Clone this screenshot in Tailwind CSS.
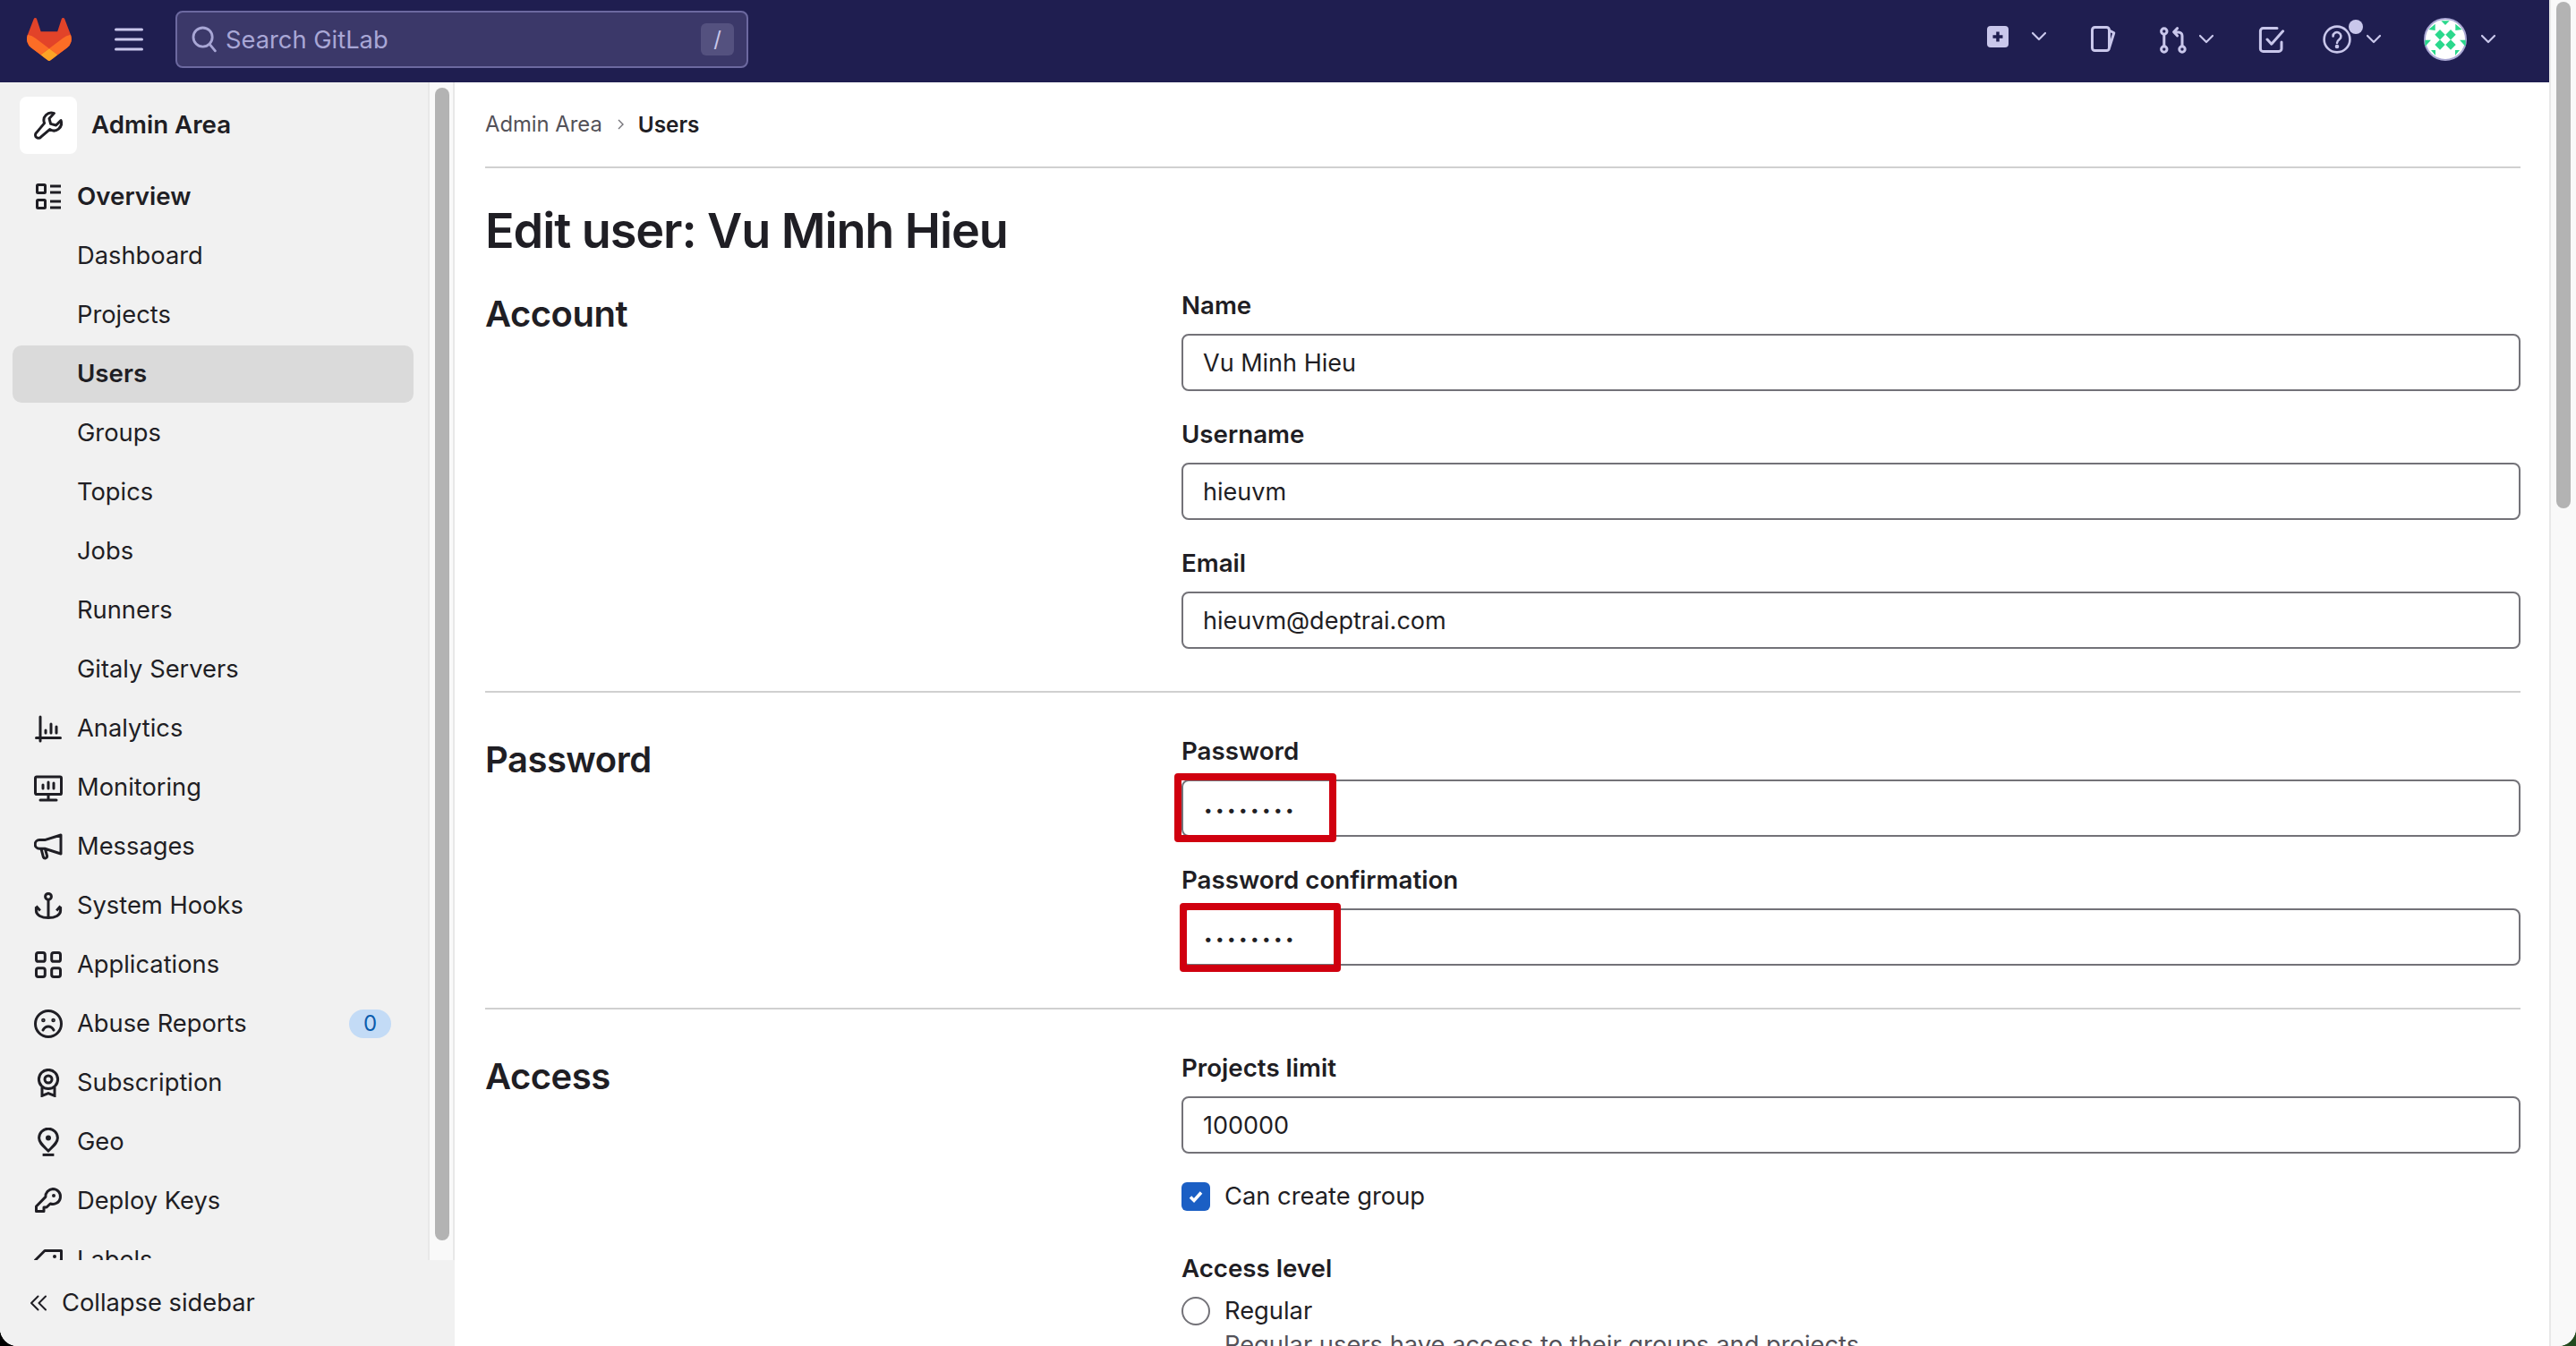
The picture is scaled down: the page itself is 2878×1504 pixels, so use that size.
<!DOCTYPE html>
<html lang="en">
<head>
<meta charset="utf-8">
<title>Edit user · Admin Area · GitLab</title>
<script src="https://cdn.jsdelivr.net/npm/@tailwindcss/browser@4"></script>
</head>
<body class="bg-[linear-gradient(90deg,#000_50%,#234a1f_50%)]">
<div class="relative w-[2878px] h-[1504px] overflow-hidden font-['Inter','Liberation_Sans',sans-serif] text-[#1f1e24] text-[27.3px] bg-white flex rounded-bl-[20px] rounded-br-[20px]">
  <div class="flex-1 min-w-0 flex flex-col">
    <!-- top bar -->
    <header class="h-[92px] shrink-0 bg-[#1f1e50] flex items-center pb-[4px] text-[#c9c7eb]">
      <svg class="ml-[30px] w-[50px] h-[48px]" viewBox="0 0 25 24"><path d="m24.507 9.5-.034-.09L21.082.562a.896.896 0 0 0-1.694.091l-2.29 7.01H7.825L5.535.653a.898.898 0 0 0-1.694-.09L.451 9.411.416 9.5a6.297 6.297 0 0 0 2.09 7.278l.012.01.03.022 5.16 3.867 2.56 1.935 1.554 1.176a1.051 1.051 0 0 0 1.268 0l1.555-1.176 2.56-1.935 5.197-3.89.014-.01A6.297 6.297 0 0 0 24.507 9.5Z" fill="#E24329"/><path d="m24.507 9.5-.034-.09a11.44 11.44 0 0 0-4.56 2.051l-7.447 5.632 4.742 3.584 5.197-3.89.014-.01A6.297 6.297 0 0 0 24.507 9.5Z" fill="#FC6D26"/><path d="m7.707 20.677 2.56 1.935 1.555 1.176a1.051 1.051 0 0 0 1.268 0l1.555-1.176 2.56-1.935-4.743-3.584-4.755 3.584Z" fill="#FCA326"/><path d="M5.01 11.461a11.43 11.43 0 0 0-4.56-2.05L.416 9.5a6.297 6.297 0 0 0 2.09 7.278l.012.01.03.022 5.16 3.867 4.745-3.584-7.444-5.632Z" fill="#FC6D26"/></svg>
      <svg class="ml-[48px] w-[32px] h-[32px]" viewBox="0 0 16 16" fill="none" stroke="currentColor" stroke-width="1.5" stroke-linecap="round"><path d="M.75 2.5h14.5M.75 8h14.5M.75 13.5h14.5"/></svg>
      <div class="ml-[36px] w-[640px] h-[64px] rounded-[8px] bg-[#3b3869] border-2 border-[#6c69a0] flex items-center pl-[16px] pr-[14px]">
        <svg class="w-[28px] h-[32px]" viewBox="0 0 14 16" fill="none" stroke="#a9a7d6" stroke-width="1.4" stroke-linecap="round"><circle cx="6.3" cy="6.8" r="5.3"/><path d="M10.2 10.8l3 3.6"/></svg>
        <span class="ml-[10px] pt-[2px] text-[#a9a7d6]">Search GitLab</span>
        <span class="ml-auto w-[37px] h-[36px] rounded-[6px] bg-[#54517f] flex items-center justify-center text-[#c9c7eb] text-[24px]">/</span>
      </div>
      <div class="ml-auto flex items-center relative w-[600px] h-full">
        <svg class="absolute left-[-28px] top-[29px] w-[24px] h-[24px]" viewBox="0 0 24 24"><rect width="24" height="24" rx="4" fill="#c9c7eb"/><path d="M12 6.5v11M6.500 12h11" stroke="#1f1e50" stroke-width="3.5"/></svg>
        <svg class="absolute left-[22px] top-[34px] w-[16px] h-[16px]" viewBox="0 0 16 16" fill="none" stroke="currentColor" stroke-width="2.2" stroke-linecap="round" stroke-linejoin="round"><path d="M1 3l7 7 7-7"/></svg>
        <svg class="absolute left-[86px] top-[28px] w-[32px] h-[32px]" viewBox="0 0 16 16" fill="none" stroke="currentColor" stroke-width="1.5" stroke-linejoin="round"><rect x="1.75" y="1.25" width="9.5" height="13" rx="1.5"/><path d="M11.3 3l2.600 1.400-2.600 8.200"/></svg>
        <svg class="absolute left-[164px] top-[28px] w-[32px] h-[32px]" viewBox="0 0 16 16" fill="none" stroke="currentColor" stroke-width="1.5" stroke-linecap="round" stroke-linejoin="round"><circle cx="2.9" cy="3.500" r="1.6"/><circle cx="2.9" cy="13.500" r="1.6"/><circle cx="13" cy="13.500" r="1.6"/><path d="M2.900 5.100v6.800M13 11.900V6a2 2 0 0 0-2-2H8.600M10.300 1.800L8.300 3.900l2 2.100"/></svg>
        <svg class="absolute left-[209px] top-[37px] w-[16px] h-[16px]" viewBox="0 0 16 16" fill="none" stroke="currentColor" stroke-width="2.2" stroke-linecap="round" stroke-linejoin="round"><path d="M1 3l7 7 7-7"/></svg>
        <svg class="absolute left-[274px] top-[28px] w-[32px] h-[32px]" viewBox="0 0 16 16" fill="none" stroke="currentColor" stroke-width="1.5" stroke-linecap="round" stroke-linejoin="round"><path d="M13.500 9.500v3.700a1.500 1.500 0 0 1-1.500 1.500H3.200a1.500 1.500 0 0 1-1.500-1.500V3.300a1.500 1.500 0 0 1 1.500-1.500H11"/><path d="M5.500 8l2.400 2.600 6.400-7.200"/></svg>
        <svg class="absolute left-[347px] top-[28px] w-[32px] h-[32px]" viewBox="0 0 16 16" fill="none" stroke="currentColor" stroke-width="1.3" stroke-linecap="round"><circle cx="8" cy="8" r="7.2"/><path d="M5.800 6.200a2.200 2.200 0 1 1 3.500 1.800c-.8.600-1.300 1-1.300 2"/><circle cx="8" cy="12" r=".5" fill="currentColor"/></svg>
        <span class="absolute left-[376px] top-[22px] w-[16px] h-[16px] rounded-full bg-[#c9c7eb]"></span>
        <svg class="absolute left-[396px] top-[37px] w-[16px] h-[16px]" viewBox="0 0 16 16" fill="none" stroke="currentColor" stroke-width="2.2" stroke-linecap="round" stroke-linejoin="round"><path d="M1 3l7 7 7-7"/></svg>
        <svg class="absolute left-[460px] top-[20px] w-[48px] h-[48px]" viewBox="0 0 48 48"><circle cx="24" cy="24" r="23" fill="#fff" stroke="#aaa8d4" stroke-width="2"/><g fill="#2bd88c"><path d="M18 13l5.700 5.700L18 24.400l-5.700-5.700zM30 13l5.700 5.700L30 24.400l-5.700-5.700zM18 24.300l5.700 5.700L18 35.700 12.300 30zM30 24.300l5.700 5.700L30 35.700 24.300 30zM19.300 3.300h9.400L24 8zM12.700 6.700L5.300 13l7.400 1zM35.300 6.700L42.700 13l-7.400 1zM1.300 24.700H8L1.300 32zM46.700 24.700H40L46.700 32zM8 36h5v6zM40 36h-5v6z"/></g></svg>
        <svg class="absolute left-[524px] top-[37px] w-[16px] h-[16px]" viewBox="0 0 16 16" fill="none" stroke="currentColor" stroke-width="2.2" stroke-linecap="round" stroke-linejoin="round"><path d="M1 3l7 7 7-7"/></svg>
      </div>
    </header>

    <div class="flex-1 min-h-0 flex">
      <!-- sidebar -->
      <aside class="w-[508px] shrink-0 flex flex-col bg-[#f1f1f1]">
        <div class="flex-1 min-h-0 flex overflow-hidden">
          <nav class="w-[478px] shrink-0 bg-[#f1f1f1]">
            <div class="h-[95px] pt-[16px] pl-[22px] flex items-start">
              <span class="w-[64px] h-[64px] rounded-[8px] bg-white flex items-center justify-center">
                <svg class="w-[32px] h-[32px]" viewBox="0 0 16 16" fill="none" stroke="#1f1e24" stroke-width="1.5" stroke-linejoin="round"><path d="M15 5.300L12.300 8 9.300 7.200 8.500 4.200 11.200 1.300A4.200 4.200 0 0 0 5.800 6.800L1.200 12.300a1.700 1.700 0 0 0 2.600 2.300L8.800 10.300A4.200 4.200 0 0 0 15 5.300z"/></svg>
              </span>
              <span class="ml-[16px] h-[64px] flex items-center font-semibold text-[27.7px]">Admin Area</span>
            </div>
            <ul>
              <li class="h-[66px] flex items-center pl-[38px] font-semibold text-[27.7px]"><svg class="w-[32px] h-[32px] mr-[16px] shrink-0" viewBox="0 0 16 16" fill="none" stroke="#1f1e24" stroke-width="1.5"><rect x="1.75" y="1.25" width="4.5" height="4.5" rx=".5"/><rect x="1.75" y="9.750" width="4.500" height="4.500" rx=".5"/><path d="M9 2h6M9 5.500h6M9 10.500h6M9 14h6"/></svg>Overview</li>
              <li class="h-[66px] flex items-center pl-[86px]">Dashboard</li>
              <li class="h-[66px] flex items-center pl-[86px]">Projects</li>
              <li class="h-[64px] my-[1px] flex items-center ml-[14px] pl-[72px] w-[448px] rounded-[10px] bg-[#dadada] font-semibold text-[27.7px]">Users</li>
              <li class="h-[66px] flex items-center pl-[86px]">Groups</li>
              <li class="h-[66px] flex items-center pl-[86px]">Topics</li>
              <li class="h-[66px] flex items-center pl-[86px]">Jobs</li>
              <li class="h-[66px] flex items-center pl-[86px]">Runners</li>
              <li class="h-[66px] flex items-center pl-[86px]">Gitaly Servers</li>
              <li class="h-[66px] flex items-center pl-[38px]"><svg class="w-[32px] h-[32px] mr-[16px] shrink-0" viewBox="0 0 16 16" fill="none" stroke="#1f1e24" stroke-width="1.5" stroke-linecap="round"><path d="M3.500 1.500V15M1.250 13.200h13.500M6.500 9v1.500M9.500 5.500v5M12.500 7v3.500"/></svg>Analytics</li>
              <li class="h-[66px] flex items-center pl-[38px]"><svg class="w-[32px] h-[32px] mr-[16px] shrink-0" viewBox="0 0 16 16" fill="none" stroke="#1f1e24" stroke-width="1.5" stroke-linecap="round"><rect x=".75" y="2" width="14.500" height="9.800" rx=".7"/><path d="M8 12v3M3.500 15h9M5 6.500v2M8 5v3.500M11 5.500v3"/></svg>Monitoring</li>
              <li class="h-[66px] flex items-center pl-[38px]"><svg class="w-[32px] h-[32px] mr-[16px] shrink-0" viewBox="0 0 16 16" fill="none" stroke="#1f1e24" stroke-width="1.5" stroke-linejoin="round"><path d="M15 1.500L6 4.300H3a2.300 2.300 0 0 0 0 4.800h3l9 2.900zM4 9.200l1.200 4.600a1.100 1.100 0 0 0 2.100-.6L6.200 9.200"/></svg>Messages</li>
              <li class="h-[66px] flex items-center pl-[38px]"><svg class="w-[32px] h-[32px] mr-[16px] shrink-0" viewBox="0 0 16 16" fill="none" stroke="#1f1e24" stroke-width="1.5"><circle cx="8" cy="2.900" r="1.700"/><path d="M8 4.600v10M1.200 8.600v2.200c0 2.500 3 4 6.800 4s6.800-1.500 6.800-4V8.600M1.200 8.200l2.200 2.500M14.800 8.200l-2.200 2.500"/></svg>System Hooks</li>
              <li class="h-[66px] flex items-center pl-[38px]"><svg class="w-[32px] h-[32px] mr-[16px] shrink-0" viewBox="0 0 16 16" fill="none" stroke="#1f1e24" stroke-width="1.5"><rect x="1.25" y="1.25" width="4.900" height="4.900" rx="1.200"/><rect x="9.850" y="1.25" width="4.900" height="4.900" rx="1.200"/><rect x="1.25" y="9.850" width="4.900" height="4.900" rx="1.200"/><rect x="9.850" y="9.850" width="4.900" height="4.900" rx="1.200"/></svg>Applications</li>
              <li class="h-[66px] flex items-center pl-[38px] pr-[41px]"><svg class="w-[32px] h-[32px] mr-[16px] shrink-0" viewBox="0 0 16 16" fill="none" stroke="#1f1e24" stroke-width="1.5" stroke-linecap="round"><circle cx="8" cy="8" r="7.250"/><path d="M5 11.500c.7-1.300 1.700-2 3-2s2.300.7 3 2"/><circle cx="5.200" cy="6" r=".4" fill="#1f1e24"/><circle cx="10.800" cy="6" r=".4" fill="#1f1e24"/></svg>Abuse Reports<span class="ml-auto w-[47px] h-[32px] rounded-full bg-[#c3dbf6] text-[#0b5cad] text-[24px] flex items-center justify-center">0</span></li>
              <li class="h-[66px] flex items-center pl-[38px]"><svg class="w-[32px] h-[32px] mr-[16px] shrink-0" viewBox="0 0 16 16" fill="none" stroke="#1f1e24" stroke-width="1.5"><circle cx="8" cy="6" r="5.300"/><circle cx="8" cy="6" r="2"/><path d="M4.500 10.500V15.200L8 13.800l3.500 1.400V10.500"/></svg>Subscription</li>
              <li class="h-[66px] flex items-center pl-[38px]"><svg class="w-[32px] h-[32px] mr-[16px] shrink-0" viewBox="0 0 16 16" fill="none" stroke="#1f1e24" stroke-width="1.5"><path d="M8 13C5.500 10.500 2.800 8.500 2.800 5.800a5.200 5.200 0 0 1 10.400 0C13.200 8.500 10.500 10.500 8 13z"/><circle cx="8" cy="5.800" r="1.500" fill="#1f1e24" stroke="none"/><path d="M4.800 15.200h6.400"/></svg>Geo</li>
              <li class="h-[66px] flex items-center pl-[38px]"><svg class="w-[32px] h-[32px] mr-[16px] shrink-0" viewBox="0 0 16 16" fill="none" stroke="#1f1e24" stroke-width="1.5" stroke-linejoin="round"><path d="M10.500 1.250a4.250 4.250 0 1 1-1.400 8.260L7 11.500H5.500v2.200H1.250V11l5.200-5.300a4.250 4.250 0 0 1 4.050-4.450z"/><circle cx="11" cy="5" r="1" fill="#1f1e24" stroke="none"/></svg>Deploy Keys</li>
              <li class="h-[66px] flex items-center pl-[38px]"><svg class="w-[32px] h-[32px] mr-[16px] shrink-0" viewBox="0 0 16 16" fill="none" stroke="#1f1e24" stroke-width="1.5" stroke-linejoin="round"><path d="M.75 8L6 2.750h9.250V8L9.500 14 .75 8z"/><circle cx="11.500" cy="6" r="1" fill="#1f1e24" stroke="none"/></svg>Labels</li>
            </ul>
          </nav>
          <div class="w-[30px] shrink-0 bg-[#f9f9f9] border-l-2 border-r-2 border-[#e8e8e8] pt-[6px] pl-[6px]">
            <div class="w-[16px] h-[1288px] rounded-full bg-[#b3b3b3]"></div>
          </div>
        </div>
        <div class="h-[96px] shrink-0 flex items-center pl-[34px] bg-[#f1f1f1]">
          <svg class="w-[18px] h-[18px] mr-[17px]" viewBox="0 0 18 18" fill="none" stroke="#1f1e24" stroke-width="2" stroke-linecap="round" stroke-linejoin="round"><path d="M8.500 1.500L1 9l7.500 7.500M17 1.500L9.500 9l7.500 7.500"/></svg>
          <span>Collapse sidebar</span>
        </div>
      </aside>

      <!-- content -->
      <main class="flex-1 min-w-0 pl-[34px] pr-[32px] overflow-hidden">
        <div class="h-[96px] border-b-2 border-[#d0d0d0] flex items-center text-[24px]">
          <span class="text-[#535158] text-[23.800px]">Admin Area</span>
          <svg class="mx-[14px] w-[12px] h-[14px]" viewBox="0 0 12 14" fill="none" stroke="#737278" stroke-width="1.4"><path d="M4 2l5 5-5 5"/></svg>
          <span class="font-semibold text-[24.300px]">Users</span>
        </div>
        <h1 class="mt-[34px] h-[70px] mb-[31px] flex items-center text-[54px] font-semibold tracking-[-1.1px]">Edit user: Vu Minh Hieu</h1>

        <section class="flex pb-[47px] border-b-2 border-[#d0d0d0]">
          <h2 class="w-[778px] shrink-0 h-[56px] flex items-center text-[40px] font-semibold tracking-[-0.5px]">Account</h2>
          <div class="flex-1 flex flex-col gap-[30px]">
            <div><label class="h-[34px] pt-[3px] flex items-center font-semibold text-[27.7px] mb-[16px]">Name</label><input class="w-full h-[64px] border-2 border-[#737278] rounded-[8px] px-[22px] outline-none text-[27px]" value="Vu Minh Hieu"></div>
            <div><label class="h-[34px] pt-[3px] flex items-center font-semibold text-[27.7px] mb-[16px]">Username</label><input class="w-full h-[64px] border-2 border-[#737278] rounded-[8px] px-[22px] outline-none text-[27px]" value="hieuvm"></div>
            <div><label class="h-[34px] pt-[3px] flex items-center font-semibold text-[27.7px] mb-[16px]">Email</label><input class="w-full h-[64px] border-2 border-[#737278] rounded-[8px] px-[22px] outline-none text-[27px]" value="hieuvm@deptrai.com"></div>
          </div>
        </section>

        <section class="flex pt-[47px] pb-[47px] border-b-2 border-[#d0d0d0]">
          <h2 class="w-[778px] shrink-0 h-[56px] flex items-center text-[40px] font-semibold tracking-[-0.5px]">Password</h2>
          <div class="flex-1 flex flex-col gap-[30px]">
            <div class="relative"><label class="h-[34px] pt-[3px] flex items-center font-semibold text-[27.7px] mb-[16px]">Password</label><input type="password" class="w-full h-[64px] border-2 border-[#737278] rounded-[8px] pl-[23px] pt-[4px] outline-none text-[17px] tracking-[3.45px]" value="password"><span class="absolute left-[-8px] top-[43px] w-[181px] h-[77px] border-[8px] border-[#d0000f] rounded-[4px]"></span></div>
            <div class="relative"><label class="h-[34px] pt-[3px] flex items-center font-semibold text-[27.7px] mb-[16px]">Password confirmation</label><input type="password" class="w-full h-[64px] border-2 border-[#737278] rounded-[8px] pl-[23px] pt-[4px] outline-none text-[17px] tracking-[3.45px]" value="password"><span class="absolute left-[-2px] top-[44px] w-[180px] h-[77px] border-[8px] border-[#d0000f] rounded-[4px]"></span></div>
          </div>
        </section>

        <section class="flex pt-[47px]">
          <h2 class="w-[778px] shrink-0 h-[56px] flex items-center text-[40px] font-semibold tracking-[-0.5px]">Access</h2>
          <div class="flex-1">
            <label class="h-[34px] pt-[3px] flex items-center font-semibold text-[27.7px] mb-[16px]">Projects limit</label>
            <input class="w-full h-[64px] border-2 border-[#737278] rounded-[8px] px-[22px] outline-none text-[27px]" value="100000">
            <div class="mt-[32px] flex items-center h-[32px]">
              <span class="w-[32px] h-[32px] rounded-[6px] bg-[#1b5fc4] flex items-center justify-center"><svg class="w-[18px] h-[18px]" viewBox="0 0 18 18" fill="none" stroke="#fff" stroke-width="3.500"><path d="M3 9.500l4 4 8-9"/></svg></span>
              <span class="ml-[16px]">Can create group</span>
            </div>
            <div class="mt-[46px] h-[34px] pt-[3px] flex items-center font-semibold text-[27.7px]">Access level</div>
            <div class="mt-[16px] flex items-center h-[32px]">
              <span class="w-[32px] h-[32px] rounded-full border-2 border-[#737278] bg-white"></span>
              <span class="ml-[16px]">Regular</span>
            </div>
            <p class="mt-[2px] ml-[48px] text-[#535158]">Regular users have access to their groups and projects.</p>
          </div>
        </section>
      </main>
    </div>
  </div>
  <!-- page scrollbar -->
  <div class="w-[30px] shrink-0 bg-[#f9f9f9] border-l-2 border-[#e8e8e8] pt-[2px] pl-[6px]">
    <div class="w-[16px] h-[566px] rounded-full bg-[#b3b3b3]"></div>
  </div>
</div>
</body>
</html>
